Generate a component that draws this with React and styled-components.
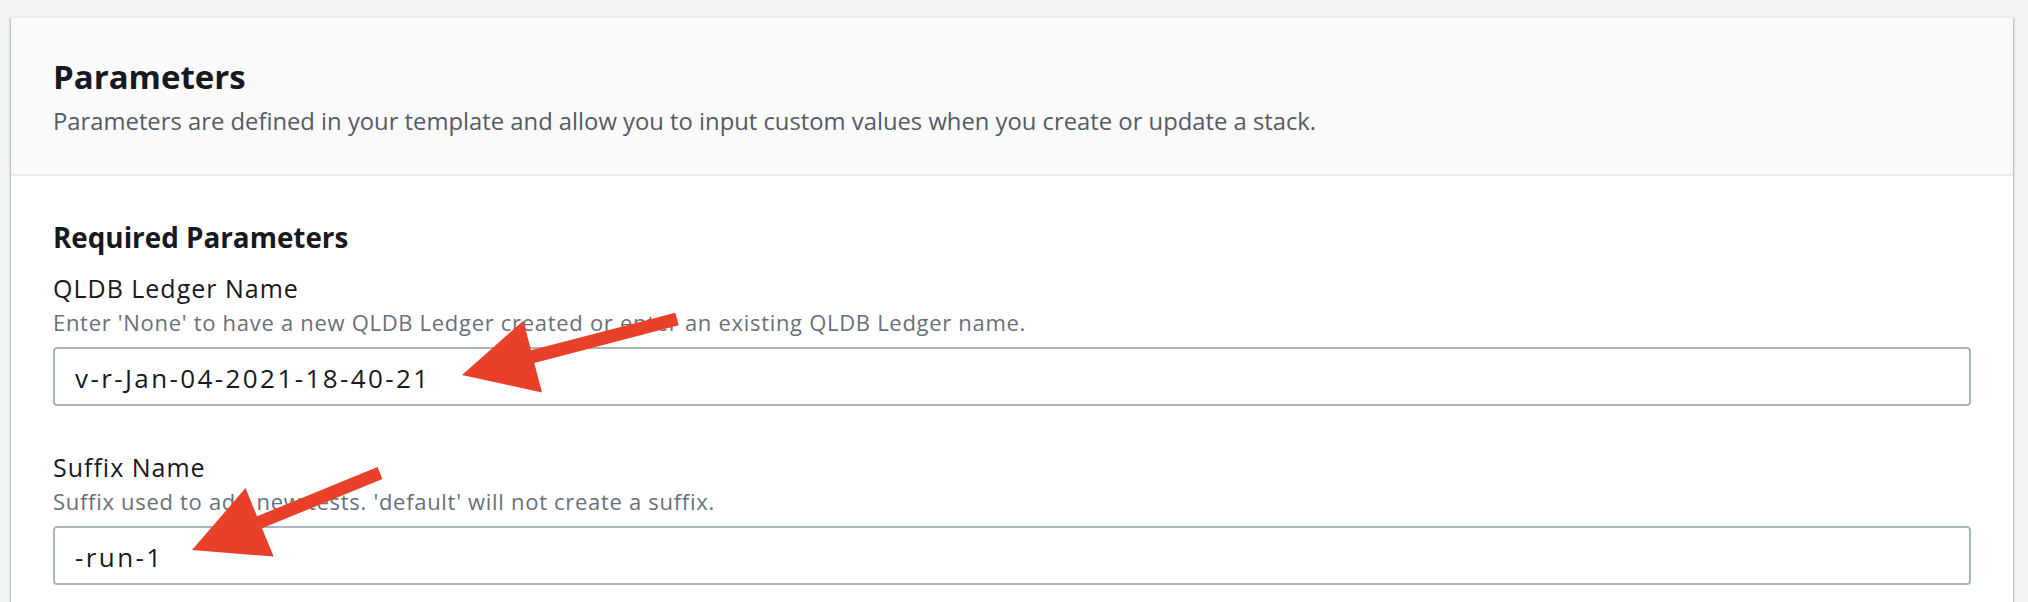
import React from "react";
import styled, { createGlobalStyle } from "styled-components";

const Global = createGlobalStyle`
  html, body {
    margin: 0;
    padding: 0;
    background: #f2f3f3;
    overflow: hidden;
  }
  body {
    font-family: "Open Sans", "Noto Sans", sans-serif;
    color: #16191f;
  }
`;

const arrows = [
  { tail: [677, 319], tip: [462, 375] },
  { tail: [380, 473], tip: [192, 550] },
];

// build the outline of a flat arrow from tail to tip
const arrowPoints = ({ tail, tip }, shaft = 13, headLen = 73, headW = 74) => {
  const dx = tip[0] - tail[0];
  const dy = tip[1] - tail[1];
  const len = Math.hypot(dx, dy);
  const ux = dx / len;
  const uy = dy / len;
  const nx = -uy;
  const ny = ux;
  const bx = tip[0] - ux * headLen;
  const by = tip[1] - uy * headLen;
  const pts = [
    [tail[0] + (nx * shaft) / 2, tail[1] + (ny * shaft) / 2],
    [bx + (nx * shaft) / 2, by + (ny * shaft) / 2],
    [bx + (nx * headW) / 2, by + (ny * headW) / 2],
    tip,
    [bx - (nx * headW) / 2, by - (ny * headW) / 2],
    [bx - (nx * shaft) / 2, by - (ny * shaft) / 2],
    [tail[0] - (nx * shaft) / 2, tail[1] - (ny * shaft) / 2],
  ];
  return pts.map((p) => p.join(",")).join(" ");
};

const fields = [
  {
    label: "QLDB Ledger Name",
    hint: "Enter 'None' to have a new QLDB Ledger created or enter an existing QLDB Ledger name.",
    value: "v-r-Jan-04-2021-18-40-21",
  },
  {
    label: "Suffix Name",
    hint: "Suffix used to add new tests. 'default' will not create a suffix.",
    value: "-run-1",
  },
];

const App = () => {
  return (
    <Page>
      <Global />
      <Panel>
        <Header>
          <Title>Parameters</Title>
          <Lead>
            Parameters are defined in your template and allow you to input custom values when you
            create or update a stack.
          </Lead>
        </Header>
        <Body>
          <Section>Required Parameters</Section>
          {fields.map((f) => (
            <Field key={f.label}>
              <Label>{f.label}</Label>
              <Hint>{f.hint}</Hint>
              <Input readOnly value={f.value} />
            </Field>
          ))}
        </Body>
      </Panel>
      <Overlay width="2028" height="602" viewBox="0 0 2028 602">
        {arrows.map((a, i) => (
          <polygon key={i} points={arrowPoints(a)} fill="#e9402a" />
        ))}
      </Overlay>
    </Page>
  );
};

export default App;

const Page = styled.div`
  position: relative;
  padding: 17px 15px 0 11px;
  height: 602px;
  box-sizing: border-box;
`;

const Panel = styled.div`
  background: #ffffff;
  border-top: 1px solid #eaeded;
  box-shadow: 0 1px 2px 0 rgba(0, 28, 36, 0.3), 1px 1px 2px 0 rgba(0, 28, 36, 0.15),
    -1px 1px 2px 0 rgba(0, 28, 36, 0.15);
`;

const Header = styled.div`
  background: #fafafa;
  border-bottom: 2px solid #eaeded;
  padding: 39px 42px 37px;
`;

const Title = styled.h2`
  margin: 0;
  font-size: 33px;
  line-height: 40px;
  font-weight: 700;
  color: #16191f;
`;

const Lead = styled.div`
  margin-top: 8px;
  font-size: 23.8px;
  line-height: 32px;
  color: #545b64;
`;

const Body = styled.div`
  padding: 44px 42px 40px;
  display: flex;
  flex-direction: column;
`;

const Section = styled.div`
  font-size: 27.8px;
  line-height: 34px;
  font-weight: 700;
  color: #16191f;
`;

const Field = styled.div`
  display: flex;
  flex-direction: column;
  margin-top: 17px;
  & + & {
    margin-top: 44px;
  }
`;

const Label = styled.div`
  font-size: 25px;
  line-height: 34px;
  letter-spacing: 1px;
  color: #16191f;
`;

const Hint = styled.div`
  margin-top: 3px;
  font-size: 22px;
  line-height: 28px;
  letter-spacing: 0.7px;
  color: #687078;
`;

const Input = styled.input`
  margin-top: 11px;
  height: 59px;
  box-sizing: border-box;
  border: 2px solid #aab7b8;
  border-radius: 4px;
  padding: 2px 20px 0;
  font-family: "Open Sans", "Noto Sans", sans-serif;
  font-size: 26px;
  letter-spacing: 2.4px;
  color: #16191f;
  background: #ffffff;
  outline: none;
`;

const Overlay = styled.svg`
  position: absolute;
  top: 0;
  left: 0;
  pointer-events: none;
`;
